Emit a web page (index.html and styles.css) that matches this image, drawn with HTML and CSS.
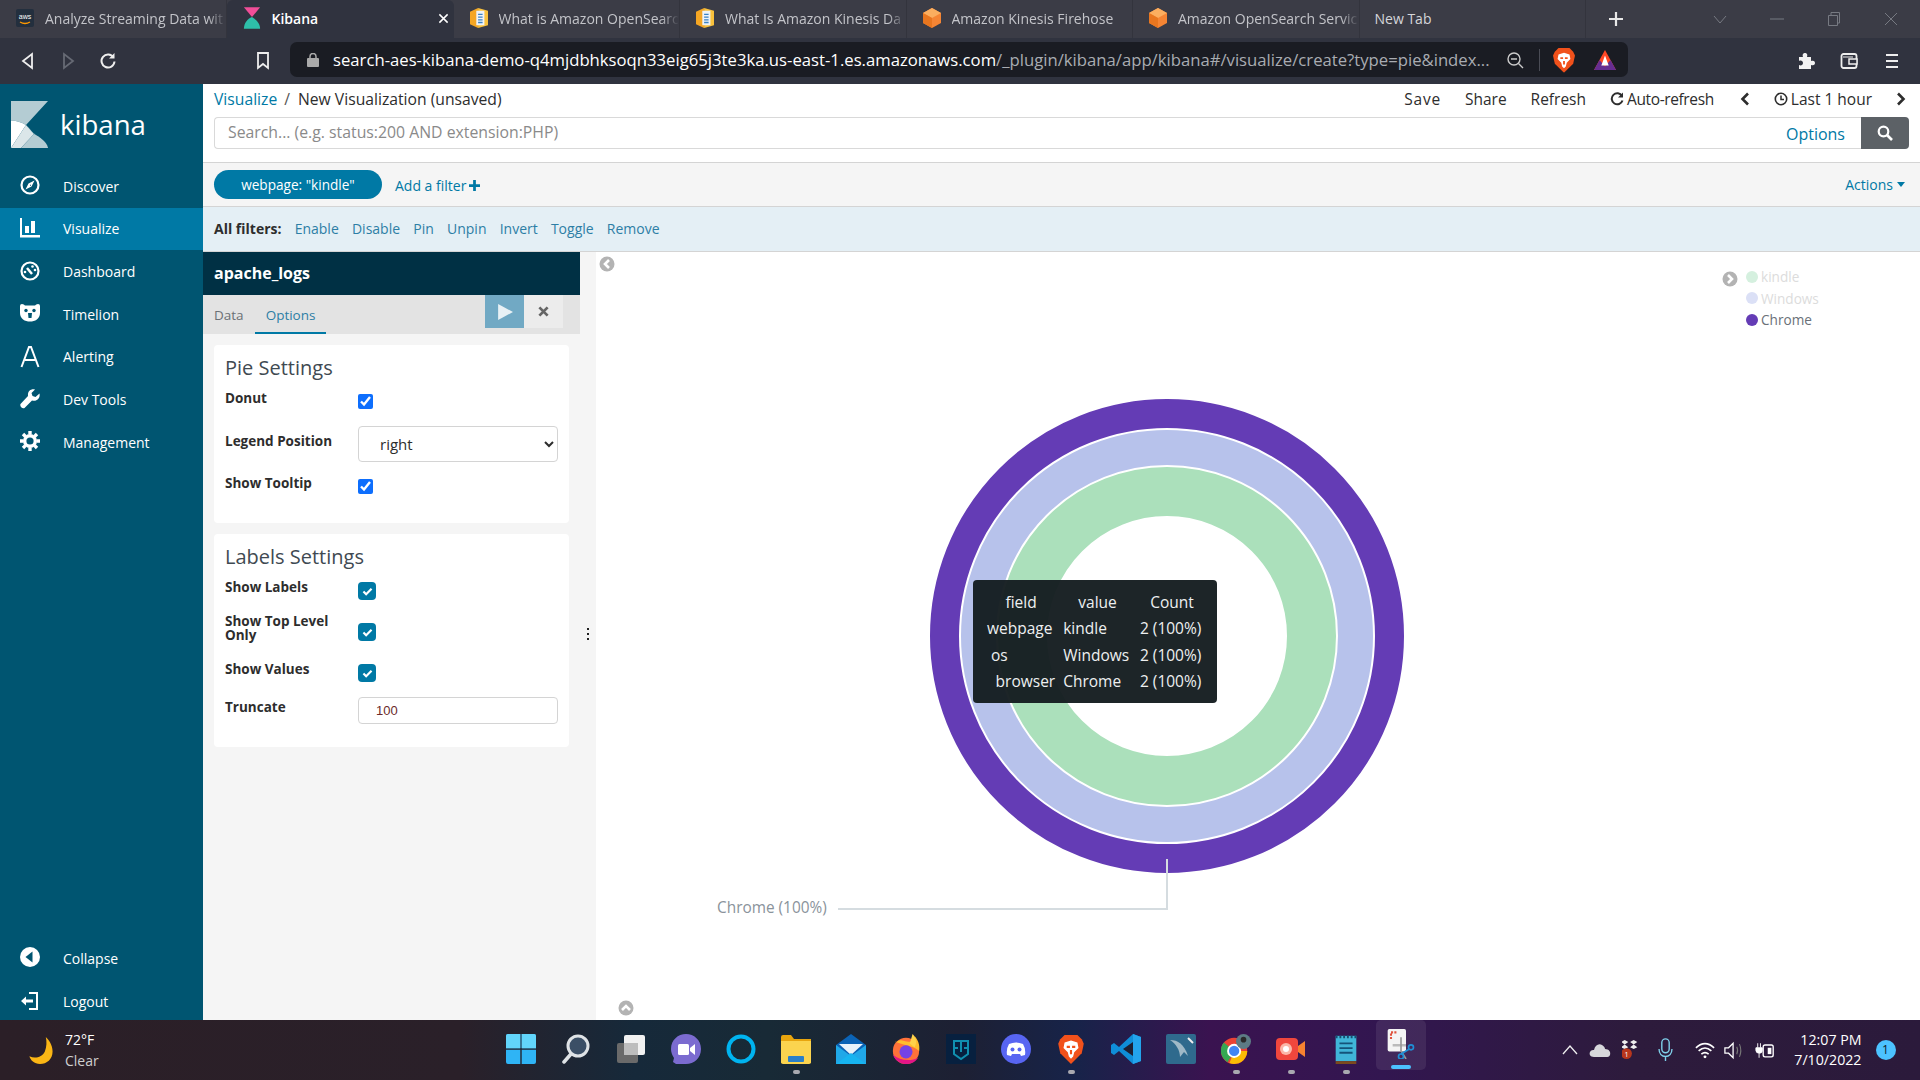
FILE: index.html
```html
<!DOCTYPE html>
<html lang="en">
<head>
<meta charset="utf-8">
<title>Kibana</title>
<link rel="stylesheet" href="styles.css">
</head>
<body>
<svg class="defs" width="0" height="0">
  <symbol id="cube" viewBox="0 0 20 22"><path d="M10 0 20 5.5V16.500L10 22 0 16.500V5.500Z" fill="#f58534"/><path d="M10 0 20 5.500 10 11 0 5.500Z" fill="#fbae5f"/><path d="M10 11V22L0 16.500V5.500Z" fill="#e8761f"/></symbol>
  <symbol id="doc" viewBox="0 0 20 24"><path d="M0 5 9 1V23L0 19Z" fill="#f5a623"/><path d="M9 1 20 4V20L9 23Z" fill="#f9c13c"/><path d="M7 4h9v16H7z" fill="#eef3f7"/><path d="M9 8h5M9 11h5M9 14h5M9 17h5" stroke="#3b82c4" stroke-width="1.500"/></symbol>
  <symbol id="brave" viewBox="0 0 24 28"><path d="M6 1H18L22 5 24 9 22 18 12 28 2 18 0 9 2 5Z" fill="#f1511b"/><path d="M6 8 12 6 18 8 19 13 15 17 14 21 12 23 10 21 9 17 5 13Z" fill="#fff"/><path d="M8 11h3v2H8zM13 11h3v2h-3zM11 15h2v4h-2z" fill="#f1511b"/></symbol>
</svg>
<div class="app">
  <div class="tabs">
    <div class="tab"><svg class="fav" viewBox="0 0 18 18"><rect width="18" height="18" rx="2" fill="#232f3e"/><text x="9" y="10" class="aws">aws</text><path d="M4 13q5 3 10 0" stroke="#f90" stroke-width="1.300" fill="none"/></svg><span class="tab-text">Analyze Streaming Data wit</span></div>
    <div class="tab tab-on"><svg class="fav" viewBox="0 0 20 24"><path d="M1 0H19L10 11Z" fill="#f04e98"/><path d="M1 24C1 18 5 13 10 11 15 14 19 18 19 24Z" fill="#2ebfa9"/></svg><span class="tab-text">Kibana</span><svg class="tab-x" viewBox="0 0 12 12"><path d="M1.500 1.500 10.500 10.500M10.500 1.500 1.500 10.500" stroke="#fff" stroke-width="1.600"/></svg></div>
    <div class="tab"><svg class="fav" viewBox="0 0 20 24"><use href="#doc"/></svg><span class="tab-text">What is Amazon OpenSearc</span></div>
    <div class="tab"><svg class="fav" viewBox="0 0 20 24"><use href="#doc"/></svg><span class="tab-text">What Is Amazon Kinesis Da</span></div>
    <div class="tab"><svg class="fav" viewBox="0 0 20 22"><use href="#cube"/></svg><span class="tab-text">Amazon Kinesis Firehose</span></div>
    <div class="tab"><svg class="fav" viewBox="0 0 20 22"><use href="#cube"/></svg><span class="tab-text">Amazon OpenSearch Servic</span></div>
    <div class="tab tab-new"><span class="tab-text">New Tab</span></div>
    <svg class="plus" viewBox="0 0 16 16"><path d="M8 1V15M1 8H15" stroke="#e8e8e8" stroke-width="2.200"/></svg>
    <div class="win">
      <svg class="win-ic" viewBox="0 0 14 14"><path d="M1 4 7 11 13 4" stroke="#777a82" fill="none"/></svg>
      <svg class="win-ic" viewBox="0 0 14 14"><path d="M0 7H14" stroke="#777a82"/></svg>
      <svg class="win-ic" viewBox="0 0 14 14"><path d="M1.500 3.500H10.500V13.500H1.500ZM4 3.500V.5H12.500V11H10.500" stroke="#777a82" fill="none"/></svg>
      <svg class="win-ic" viewBox="0 0 14 14"><path d="M1 1 13 13M13 1 1 13" stroke="#777a82"/></svg>
    </div>
  </div>

  <div class="toolbar">
    <div class="nav-btns">
      <svg class="tb-ic" viewBox="0 0 18 18"><path d="M13 2V16L4 9Z" fill="none" stroke="#eee" stroke-width="1.800"/></svg>
      <svg class="tb-ic" viewBox="0 0 18 18"><path d="M5 2V16L14 9Z" fill="none" stroke="#666a74" stroke-width="1.800"/></svg>
      <svg class="tb-ic" viewBox="0 0 18 18"><path d="M14.500 5.500A6.500 6.500 0 1 0 15.500 9.500" fill="none" stroke="#eee" stroke-width="2"/><path d="M15.500 1V6.500H10Z" fill="#eee"/></svg>
    </div>
    <svg class="bookmark" viewBox="0 0 14 18"><path d="M2 1H12V16L7 12 2 16Z" fill="none" stroke="#eee" stroke-width="1.800"/></svg>
    <div class="address">
      <svg class="lock" viewBox="0 0 12 14"><rect y="5" width="12" height="9" rx="1" fill="#aaa"/><path d="M3 6V3.500a3 3 0 0 1 6 0V6" fill="none" stroke="#aaa" stroke-width="1.500"/></svg>
      <div class="url"><span class="url-host">search-aes-kibana-demo-q4mjdbhksoqn33eig65j3te3ka.us-east-1.es.amazonaws.com</span>/_plugin/kibana/app/kibana#/visualize/create?type=pie&amp;index...</div>
      <svg class="zoomout" viewBox="0 0 18 18"><circle cx="8" cy="8" r="6" fill="none" stroke="#ccc" stroke-width="1.400"/><path d="M5 8H11M12.500 12.500 17 17" stroke="#ccc" stroke-width="1.400"/></svg>
      <span class="addr-sep"></span>
      <svg class="brave-ic" viewBox="0 0 24 28"><use href="#brave"/></svg>
      <svg class="bat" viewBox="0 0 24 24"><path d="M12 1 24 23H0Z" fill="#ff4724"/><path d="M0 23 6 12 12 19 18 12 24 23Z" fill="#662d91"/><path d="M12 7 16 18H8Z" fill="#fff"/></svg>
    </div>
    <svg class="ext ext-first" viewBox="0 0 18 18"><path d="M2 5H6C5 2 6.500 1 8 1S11 2 10 5H14V9C17 8 18 9.500 18 11S17 14 14 13V17H2V13C4 14 6 13 6 11S4 8 2 9Z" fill="#f2f2f2"/></svg>
    <svg class="ext" viewBox="0 0 18 18"><rect x="1.500" y="2" width="15" height="14" rx="2" fill="none" stroke="#eee" stroke-width="1.800"/><path d="M9 7H17V12H9Z" fill="#30333f" stroke="#eee" stroke-width="1.500"/><path d="M3 5H13" stroke="#eee"/></svg>
    <svg class="ext" viewBox="0 0 18 18"><path d="M3 3H15M3 9H15M3 15H15" stroke="#eee" stroke-width="2"/></svg>
  </div>

  <div class="main">
    <aside class="sidebar">
      <div class="logo">
        <svg class="logo-mark" viewBox="0 0 37 47"><path d="M0 0H37L15 24C10 21 5 19.500 0 19.500Z" fill="#b4ccd3"/><path d="M0 19.500C5 19.500 10 21 15 24L0 47Z" fill="#fff"/><path d="M15 24 0 47H10L23 33Z" fill="#dbe6e9"/><path d="M23 33 10 47H37C36 41 29 36 23 33Z" fill="#b4ccd3"/><path d="M15 24 37 47H30C29 40 22 30 15 24Z" fill="#b4ccd3"/></svg>
        <span class="logo-text">kibana</span>
      </div>
      <nav class="nav">
        <a class="nav-item"><svg class="nav-ic" viewBox="0 0 20 20"><circle cx="10" cy="10" r="8.500" fill="none" stroke="#fff" stroke-width="2.200"/><path d="M14.500 5.500 11.500 11.500 5.500 14.500 8.500 8.500ZM10 9V11H11" fill="#fff"/></svg>Discover</a>
        <a class="nav-item nav-on"><svg class="nav-ic" viewBox="0 0 20 20"><path d="M0 0H2V17H20V19.500H0Z" fill="#fff"/><path d="M5 8H9V15H5ZM11 3H15V15H11Z" fill="#fff"/></svg>Visualize</a>
        <a class="nav-item"><svg class="nav-ic" viewBox="0 0 20 20"><circle cx="10" cy="10" r="8.500" fill="none" stroke="#fff" stroke-width="2.200"/><path d="M7 7 12 13" stroke="#fff" stroke-width="2.500"/><circle cx="12.500" cy="5.500" r="1.300" fill="#fff"/><circle cx="15" cy="9" r="1.300" fill="#fff"/><circle cx="5" cy="11" r="1.300" fill="#fff"/></svg>Dashboard</a>
        <a class="nav-item"><svg class="nav-ic" viewBox="0 0 20 20"><path d="M0 3Q0 1 2 1 4 1 5 2.500H15Q16 1 18 1 20 1 20 3V10C20 16 15 18.500 10 18.500S0 16 0 10Z" fill="#fff"/><circle cx="6" cy="7.500" r="1.700" fill="#005571"/><circle cx="14" cy="7.500" r="1.700" fill="#005571"/><path d="M8 10H12L11.500 15H8.500Z" fill="#005571"/></svg>Timelion</a>
        <a class="nav-item"><svg class="nav-ic nav-ic-a" viewBox="0 0 20 20"><path d="M1.500 20 9 0H11L18.500 20M5 13H15" fill="none" stroke="#fff" stroke-width="2"/></svg>Alerting</a>
        <a class="nav-item"><svg class="nav-ic" viewBox="0 0 20 20"><path d="M19.500 4.500 15.500 8 12.500 7 11.500 4 15 .5C11 -.5 7.500 2 8 7L.5 15C-.5 17 2 20 4.500 19L12 11.500C17 13 20.500 9 19.500 4.500Z" fill="#fff"/></svg>Dev Tools</a>
        <a class="nav-item"><svg class="nav-ic" viewBox="0 0 20 20"><circle cx="10" cy="10" r="5.300" fill="none" stroke="#fff" stroke-width="3.400"/><path d="M10 0V20M0 10H20M3 3 17 17M17 3 3 17" stroke="#fff" stroke-width="3.400" stroke-dasharray="3.500 13"/></svg>Management</a>
      </nav>
      <div class="side-foot">
        <a class="nav-item nav-collapse"><svg class="nav-ic" viewBox="0 0 20 20"><circle cx="10" cy="10" r="10" fill="#fff"/><path d="M12.500 4.500V15.500L5.500 10Z" fill="#005571"/></svg>Collapse</a>
        <a class="nav-item"><svg class="nav-ic" viewBox="0 0 20 20"><path d="M9 1H18V19H9V17H16V3H9Z" fill="#fff"/><path d="M1 10 6 5.500V8.500H13V11.500H6V14.500Z" fill="#fff"/></svg>Logout</a>
      </div>
    </aside>

    <div class="content">
      <div class="topnav">
        <div class="crumbs"><a class="link">Visualize</a><span class="crumb-sep">/</span><span>New Visualization (unsaved)</span></div>
        <div class="top-actions">
          <span class="ta-save">Save</span><span>Share</span><span>Refresh</span>
          <span class="auto auto-r"><svg class="ic-13" viewBox="0 0 14 14"><path d="M12 4A5.500 5.500 0 1 0 12.500 8.500" fill="none" stroke="#2d2d2d" stroke-width="2"/><path d="M13 .5V5.500H8Z" fill="#2d2d2d"/></svg>Auto-refresh</span>
          <svg class="chev" viewBox="0 0 10 14"><path d="M8 1.500 2.500 7 8 12.500" fill="none" stroke="#2d2d2d" stroke-width="2.600"/></svg>
          <span class="auto"><svg class="ic-13" viewBox="0 0 14 14"><circle cx="7" cy="7" r="5.700" fill="none" stroke="#2d2d2d" stroke-width="1.600"/><path d="M7 3.500V7.500H10" fill="none" stroke="#2d2d2d" stroke-width="1.500"/></svg>Last 1 hour</span>
          <svg class="chev" viewBox="0 0 10 14"><path d="M2 1.500 7.500 7 2 12.500" fill="none" stroke="#2d2d2d" stroke-width="2.600"/></svg>
        </div>
      </div>
      <div class="searchrow">
        <div class="searchbox"><span class="placeholder">Search... (e.g. status:200 AND extension:PHP)</span><a class="link options">Options</a></div>
        <div class="searchbtn"><svg class="ic-16" viewBox="0 0 16 16"><circle cx="6.500" cy="6.500" r="4.800" fill="none" stroke="#fff" stroke-width="2.200"/><path d="M10 10 15 15" stroke="#fff" stroke-width="2.600"/></svg></div>
      </div>
      <div class="filterbar">
        <span class="pill">webpage: "kindle"</span>
        <a class="link addfilter">Add a filter<svg class="ic-11" viewBox="0 0 12 12"><path d="M6 0V12M0 6H12" stroke="#0079a5" stroke-width="3"/></svg></a>
        <a class="link actions">Actions<svg class="caret" viewBox="0 0 8 5"><path d="M0 0H8L4 5Z" fill="#0079a5"/></svg></a>
      </div>
      <div class="allfilters">
        <b class="af-title">All filters:</b><a>Enable</a><a>Disable</a><a>Pin</a><a>Unpin</a><a>Invert</a><a>Toggle</a><a>Remove</a>
      </div>

      <div class="work">
        <section class="panel">
          <div class="panel-inner">
            <h2 class="index-title">apache_logs</h2>
            <div class="panel-tabs">
              <span class="ptab">Data</span><span class="ptab ptab-on">Options</span>
              <span class="ptab-space"></span>
              <span class="play"><svg class="ic-16" viewBox="0 0 14 14"><path d="M1 0 14 7 1 14Z" fill="#e8f1f5"/></svg></span>
              <span class="discard"><svg class="ic-11" viewBox="0 0 12 12"><path d="M1.500 1.500 10.500 10.500M10.500 1.500 1.500 10.500" stroke="#666" stroke-width="3"/></svg></span>
            </div>
            <div class="card card-a">
              <h3 class="card-title">Pie Settings</h3>
              <div class="row row-donut"><label class="lab">Donut</label><input class="cb" type="checkbox" checked></div>
              <div class="row row-legend"><label class="lab lab-sel">Legend Position</label><select class="sel"><option>right</option></select></div>
              <div class="row"><label class="lab">Show Tooltip</label><input class="cb" type="checkbox" checked></div>
            </div>
            <div class="card card-b">
              <h3 class="card-title">Labels Settings</h3>
              <div class="row row-l1"><label class="lab">Show Labels</label><span class="tick"><svg viewBox="0 0 12 10"><path d="M1.500 5 4.500 8 10.500 2" fill="none" stroke="#fff" stroke-width="2.400"/></svg></span></div>
              <div class="row row-l2"><label class="lab lab-two">Show Top Level Only</label><span class="tick tick-two"><svg viewBox="0 0 12 10"><path d="M1.500 5 4.500 8 10.500 2" fill="none" stroke="#fff" stroke-width="2.400"/></svg></span></div>
              <div class="row row-l3"><label class="lab">Show Values</label><span class="tick"><svg viewBox="0 0 12 10"><path d="M1.500 5 4.500 8 10.500 2" fill="none" stroke="#fff" stroke-width="2.400"/></svg></span></div>
              <div class="row row-l4"><label class="lab">Truncate</label><input class="num" type="text" value="100"></div>
            </div>
          </div>
          <div class="gutter"><span class="dots"></span></div>
        </section>

        <section class="chart">
          <svg class="chart-svg" viewBox="0 0 1324 769">
            <circle cx="571" cy="385" r="222.500" fill="none" stroke="#643cb5" stroke-width="29"/>
            <circle cx="571" cy="385" r="188.500" fill="none" stroke="#b7c2eb" stroke-width="35"/>
            <circle cx="571" cy="385" r="144.500" fill="none" stroke="#abe0bb" stroke-width="49"/>
            <path d="M571 608V658H242" fill="none" stroke="#d5dce0" stroke-width="2"/>
            <text class="chart-label" x="121" y="662">Chrome (100%)</text>
            <g class="round-btn"><circle cx="11" cy="13" r="7.500"/><path d="M13 9 9 13 13 17" /></g>
            <g class="round-btn"><circle cx="30" cy="757" r="7.500"/><path d="M26 759 30 755 34 759" /></g>
            <g class="round-btn"><circle cx="1134" cy="28" r="7.500"/><path d="M1132 24 1136 28 1132 32" /></g>
          </svg>
          <ul class="legend">
            <li class="lg lg-dim"><i class="dot dot-g"></i>kindle</li>
            <li class="lg lg-dim"><i class="dot dot-b"></i>Windows</li>
            <li class="lg"><i class="dot dot-p"></i>Chrome</li>
          </ul>
          <table class="tip">
            <tr><th>field</th><th>value</th><th>Count</th></tr>
            <tr><td class="c-f">webpage</td><td>kindle</td><td>2 (100%)</td></tr>
            <tr><td class="c-f c-os">os</td><td>Windows</td><td>2 (100%)</td></tr>
            <tr><td class="c-f c-br">browser</td><td>Chrome</td><td>2 (100%)</td></tr>
          </table>
        </section>
      </div>
    </div>
  </div>

  <footer class="taskbar">
    <div class="weather">
      <svg class="moon" viewBox="0 0 24 28"><path d="M17 0C20 3 24 8 24 15 24 23 18 28 11 28 5 28 1 24 0 20 6 23 13 21 16 15 18 10 18 5 17 0Z" fill="#fbb615"/></svg>
      <div class="wtext"><div>72°F</div><div class="wsub">Clear</div></div>
    </div>
    <div class="apps">
      <span class="app-slot"><svg class="tk" viewBox="0 0 30 30"><path d="M0 2Q0 0 2 0H14.300V14.300H0ZM15.700 0H28Q30 0 30 2V14.300H15.700ZM0 15.700H14.300V30H2Q0 30 0 28ZM15.700 15.700H30V28Q30 30 28 30H15.700Z" fill="#2fb4f5"/><path d="M0 2Q0 0 2 0H14.300V14.300H0ZM15.700 0H28Q30 0 30 2V14.300H15.700Z" fill="#62d5fb"/></svg></span>
      <span class="app-slot"><svg class="tk" viewBox="0 0 30 30"><circle cx="17" cy="12" r="10" fill="#3b4f66" stroke="#dfe3e6" stroke-width="3"/><path d="M10 20 3 28" stroke="#dfe3e6" stroke-width="3.500" stroke-linecap="round"/></svg></span>
      <span class="app-slot"><svg class="tk" viewBox="0 0 30 30"><rect x="1" y="9" width="21" height="20" rx="2" fill="#6a6a6a"/><rect x="8" y="1" width="21" height="20" rx="2" fill="#f1f1f1"/><rect x="8" y="9" width="14" height="12" fill="#bdbdbd"/></svg></span>
      <span class="app-slot"><svg class="tk" viewBox="0 0 30 30"><path d="M15 0C23 0 30 6 30 15S23 30 15 30H5L2 28 3 24C1 21 0 18 0 15 0 6 7 0 15 0Z" fill="#7b6bd0"/><rect x="7" y="10" width="11" height="11" rx="1.500" fill="#fff"/><path d="M19 14 24 10V21L19 17Z" fill="#fff"/></svg></span>
      <span class="app-slot"><svg class="tk" viewBox="0 0 30 30"><circle cx="15" cy="15" r="12.500" fill="none" stroke="#00b4f0" stroke-width="4"/></svg></span>
      <span class="app-slot app-run"><svg class="tk" viewBox="0 0 30 30"><path d="M0 3Q0 1 2 1H10L13 5H30V29H0Z" fill="#e8a50e"/><path d="M0 7H30V28Q30 30 28 30H2Q0 30 0 28Z" fill="#fbd44f"/><rect x="7" y="22" width="16" height="6" rx="1" fill="#2a7fc8"/></svg></span>
      <span class="app-slot"><svg class="tk" viewBox="0 0 30 30"><path d="M15 0 30 11V30H0V11Z" fill="#0b63b5"/><path d="M3 10H27L15 21Z" fill="#e9f3fa"/><path d="M0 11 15 22 30 11V30H0Z" fill="#20a8e8"/><path d="M30 30H0L15 19Z" fill="#17b4f0"/></svg></span>
      <span class="app-slot"><svg class="tk" viewBox="0 0 30 32"><circle cx="15" cy="18" r="14" fill="#ff7139"/><path d="M3 8C5 11 6 5 11 7 17 9 25 9 24 2 28 6 30 12 29 18 22 12 12 12 3 8Z" fill="#ffbd2e"/><path d="M22 0C26 4 27 10 24 14L19 10Z" fill="#ffd24a"/><circle cx="15" cy="19" r="7" fill="#7542e5"/><path d="M1 22C4 30 12 32 15 32 21 32 26 29 28 25 20 30 8 28 1 22Z" fill="#e31587"/></svg></span>
      <span class="app-slot"><svg class="tk" viewBox="0 0 30 30"><rect width="30" height="30" fill="#07203f"/><path d="M8 7H22V20L15 25 8 20ZM15 7V18" fill="none" stroke="#1090b0" stroke-width="2"/><path d="M8 14H12M18 14H22" stroke="#1090b0" stroke-width="2"/></svg></span>
      <span class="app-slot"><svg class="tk" viewBox="0 0 30 30"><circle cx="15" cy="15" r="15" fill="#5865f2"/><path d="M8 10Q15 7 22 10 25 15 24 21L20 22 19 20H11L10 22 6 21Q5 15 8 10Z" fill="#fff"/><circle cx="11.500" cy="15.500" r="2" fill="#5865f2"/><circle cx="18.500" cy="15.500" r="2" fill="#5865f2"/></svg></span>
      <span class="app-slot app-run"><svg class="tk" viewBox="0 0 24 28"><use href="#brave"/></svg></span>
      <span class="app-slot"><svg class="tk" viewBox="0 0 30 30"><path d="M22 0 30 3V27L22 30 8 17 3 21 0 19V11L3 9 8 13Z" fill="#0f8ed8"/><path d="M22 8 12 15 22 22Z" fill="#1d2033"/><path d="M22 0 30 3V27L22 30Z" fill="#23a4ec"/></svg></span>
      <span class="app-slot"><svg class="tk" viewBox="0 0 30 30"><rect width="30" height="30" rx="2" fill="#2f6a8d"/><path d="M4 6C12 6 18 10 22 22L18 18 14 23C14 16 10 10 4 6Z" fill="#9fb9c7"/><path d="M22 4 27 9" stroke="#eee" stroke-width="2"/></svg></span>
      <span class="app-slot app-run"><svg class="tk" viewBox="0 0 30 32"><circle cx="13" cy="18" r="14" fill="#ea4335"/><path d="M13 18H27A14 14 0 0 1 8 31Z" fill="#fbbc04"/><path d="M13 18 6 30A14 14 0 0 1 2 9Z" fill="#34a853"/><circle cx="13" cy="18" r="6.500" fill="#4285f4" stroke="#fff" stroke-width="2"/><circle cx="23" cy="8" r="8" fill="#5d7b85"/><circle cx="23" cy="6" r="3" fill="#2a2a2a"/></svg></span>
      <span class="app-slot app-run"><svg class="tk" viewBox="0 0 30 30"><rect y="4" width="22" height="22" rx="4" fill="#f0473d"/><circle cx="10" cy="15" r="6" fill="#fbb7a8"/><circle cx="10" cy="15" r="3" fill="#fff"/><path d="M22 12 29 7V23L22 18Z" fill="#f78230"/></svg></span>
      <span class="app-slot app-run"><svg class="tk" viewBox="0 0 30 32"><rect x="4" y="2" width="22" height="27" fill="#40b5d8"/><path d="M4 29H26V32H4Z" fill="#7b4a1e"/><path d="M8 10H22M8 15H22M8 20H22" stroke="#14547a" stroke-width="2"/><path d="M4 3H26" stroke="#144f70" stroke-width="3" stroke-dasharray="2 2"/></svg></span>
      <span class="app-slot app-active"><svg class="tk" viewBox="0 0 32 36"><rect width="22" height="27" rx="2" fill="#f4f4f4"/><path d="M4 12V4H11" fill="none" stroke="#e0533d" stroke-width="2.500" stroke-dasharray="2.500 1.500"/><path d="M6 18H22V21H6Z" fill="#bbb"/><path d="M16 10V26L22 36" fill="none" stroke="#999" stroke-width="2"/><circle cx="28" cy="22" r="3" fill="none" stroke="#1f8fd6" stroke-width="2"/><circle cx="16" cy="33" r="3" fill="none" stroke="#1f8fd6" stroke-width="2"/><path d="M26 24 16 30" stroke="#1f8fd6" stroke-width="2"/></svg></span>
    </div>
    <div class="tray">
      <svg class="tr-chev" viewBox="0 0 16 10"><path d="M1 9 8 1 15 9" fill="none" stroke="#eee" stroke-width="1.300"/></svg>
      <svg class="tr-cloud" viewBox="0 0 22 16"><path d="M5 15C1 15 0 12 1 10 2 8 4 8 5 8 6 3 10 1 13 3 15 4 16 6 16 7 20 7 22 10 21 13 20 15 19 15 17 15Z" fill="#d7d7db"/></svg>
      <svg class="tr-drop" viewBox="0 0 20 24"><path d="M3 1 7 3 3 6-1 3ZM13 1 17 3 13 6 9 3ZM3 6 7 9 3 11-1 9ZM13 6 17 9 13 11 9 9Z" fill="#eee"/><circle cx="5" cy="16" r="6" fill="#b8361c"/><text x="5" y="19.500" class="badge-t">1</text></svg>
      <svg class="tr-mic" viewBox="0 0 16 26"><rect x="4" y="1" width="8" height="15" rx="4" fill="none" stroke="#7fd0ea" stroke-width="1.500"/><path d="M1 12C1 17 4 20 8 20S15 17 15 12M8 20V25" fill="none" stroke="#7fd0ea" stroke-width="1.500"/></svg>
      <svg class="tr-wifi" viewBox="0 0 22 18"><path d="M1 6Q11 -3 21 6M4 9.500Q11 3 18 9.500M7 13Q11 9.500 15 13" fill="none" stroke="#fff" stroke-width="1.800"/><circle cx="11" cy="16" r="1.600" fill="#fff"/></svg>
      <svg class="tr-vol" viewBox="0 0 22 20"><path d="M1 7H5L10 2V18L5 13H1Z" fill="none" stroke="#fff" stroke-width="1.400"/><path d="M14 6Q16 10 14 14M17 3Q20 10 17 17" fill="none" stroke="#777" stroke-width="1.200"/></svg>
      <svg class="tr-bat" viewBox="0 0 22 18"><path d="M1 6H8V9Q8 12 5 12 1 12 1 9ZM3 1V6M6 1V6M4.500 12V17" stroke="#fff" fill="#fff"/><rect x="9" y="3" width="11" height="13" rx="2" fill="none" stroke="#fff" stroke-width="1.500"/><rect x="14" y="6" width="4" height="7" fill="#fff"/></svg>
      <div class="clock"><div>12:07 PM</div><div>7/10/2022</div></div>
      <span class="notif">1</span>
    </div>
  </footer>
</div>
</body>
</html>
```

FILE: styles.css
```css
* { box-sizing: border-box; }
html, body { margin: 0; height: 100%; overflow: hidden; }
body { font-family: "Open Sans", "Noto Sans", sans-serif; color: #2d2d2d; background: #fff; }
.defs { position: absolute; }
.app { display: flex; flex-direction: column; width: 1920px; height: 1080px; }
a { text-decoration: none; }
.link { color: #0079a5; }

/* tabs */
.tabs { display: flex; align-items: stretch; height: 38px; background: #3b3c46; flex: none; }
.tab { width: 226.500px; display: flex; align-items: center; padding: 0 0 2px 16px; border-right: 1px solid #33343d; color: #c3c4c9; font-size: 14px; }
.tab-on { background: #30333f; color: #fff; font-weight: 600; border-radius: 6px 6px 0 0; border-right: 0; width: 227px; padding-left: 16px; }
.tab-new { padding-left: 15px; color: #d5d6da; }
.fav { width: 18px; height: 24px; flex: none; margin-right: 11px; }
.tab-text { white-space: nowrap; flex: 1; -webkit-mask-image: linear-gradient(90deg, #000 90%, transparent 100%); mask-image: linear-gradient(90deg, #000 90%, transparent 100%); }
.tab-on .tab-text, .tab-new .tab-text { -webkit-mask-image: none; mask-image: none; }
.aws { font-size: 7px; fill: #fff; text-anchor: middle; font-family: "Liberation Sans", sans-serif; }
.tab-x { width: 11px; height: 11px; flex: none; margin-right: 5px; }
.plus { width: 16px; height: 16px; align-self: center; margin-left: 22px; flex: none; }
.win { margin-left: auto; display: flex; align-items: center; gap: 43px; padding-right: 22px; }
.win-ic { width: 14px; height: 14px; display: block; }

/* toolbar */
.toolbar { display: flex; align-items: center; height: 46px; background: #30333f; flex: none; }
.nav-btns { display: flex; gap: 22px; margin-left: 19px; }
.tb-ic { width: 18px; height: 18px; display: block; }
.bookmark { width: 14px; height: 18px; margin-left: 139px; flex: none; margin-right: 20px; }
.address { width: 1338px; height: 35px; background: #1a1c23; border-radius: 7px; display: flex; align-items: center; padding-left: 17px; flex: none; margin-top: -3px; }
.lock { width: 12px; height: 14px; flex: none; margin-right: 14px; }
.url { width: 1158px; flex: none; white-space: nowrap; overflow: hidden; font-size: 16.700px; color: #a9acb2; }
.url-host { color: #fff; }
.zoomout { width: 18px; height: 18px; margin-left: 15px; flex: none; }
.addr-sep { width: 1px; height: 22px; background: #4a4c55; margin: 0 13px 0 15px; }
.brave-ic { width: 22px; height: 26px; flex: none; }
.bat { width: 22px; height: 22px; margin-left: 19px; flex: none; }
.ext { width: 18px; height: 18px; flex: none; margin-left: 25px; }
.ext-first { margin-left: 169px; }

/* main */
.main { flex: 1; display: flex; min-height: 0; }
.sidebar { width: 203px; flex: none; background: #005571; color: #fff; display: flex; flex-direction: column; overflow: hidden; }
.logo { display: flex; align-items: center; height: 81px; padding: 0 0 1px 11px; flex: none; }
.logo-mark { width: 37px; height: 47px; flex: none; margin-right: 12px; }
.logo-text { font-size: 27.600px; line-height: 47px; font-weight: 400; }
.nav { display: flex; flex-direction: column; }
.nav-item { display: flex; align-items: center; height: 42.650px; padding-left: 20px; color: #fff; font-size: 14px; flex: none; }
.nav-on { background: #0079a5; }
.nav-ic { width: 20px; height: 20px; margin-right: 23px; flex: none; position: relative; top: -1px; }
.nav-ic-a { width: 20px; height: 22px; top: 0; }
.nav-collapse { margin-bottom: 1px; }
.side-foot { margin-top: auto; margin-bottom: -3px; }

.content { flex: 1; display: flex; flex-direction: column; min-width: 0; }
.topnav { display: flex; align-items: center; justify-content: space-between; height: 33px; padding: 0 0 3px 11px; flex: none; font-size: 15.700px; }
.crumbs { display: flex; font-size: 15.700px; }
.crumb-sep { margin: 0 8px 0 7px; color: #555; }
.top-actions { display: flex; align-items: center; color: #2d2d2d; font-size: 15.500px; gap: 24px; padding-right: 14px; }
.ta-save { letter-spacing: .8px; }
.auto { display: inline-flex; align-items: center; gap: 3px; }
.auto-r { letter-spacing: -.38px; margin-right: 2px; }
.ic-13 { width: 14px; height: 14px; flex: none; }
.ic-16 { width: 16px; height: 16px; display: block; }
.ic-11 { width: 11px; height: 11px; flex: none; }
.chev { width: 10px; height: 14px; flex: none; }
.searchrow { display: flex; height: 46px; padding: 0 11px 13px; flex: none; border-bottom: 1px solid #d4d4d4; }
.searchbox { flex: 1; display: flex; align-items: center; justify-content: space-between; border: 1px solid #d9d9d9; border-right: 0; border-radius: 4px 0 0 4px; padding: 0 16px 2px 13px; font-size: 15.800px; }
.placeholder { color: #8a8a8a; }
.options { position: relative; top: 2px; font-size: 16px; }
.searchbtn { width: 48px; background: #5c6166; display: flex; align-items: center; justify-content: center; border-radius: 0 4px 4px 0; }
.filterbar { display: flex; align-items: center; height: 44px; padding: 0 15px 0 11px; background: #f5f5f5; border-bottom: 1px solid #d4d4d4; flex: none; }
.pill { width: 168px; height: 29px; background: #0079a5; border-radius: 15px; color: #fff; font-size: 13.600px; display: flex; align-items: center; justify-content: center; margin-top: -1px; }
.addfilter { font-size: 14px; margin: 2px 0 0 13px; display: inline-flex; align-items: center; gap: 3px; }
.actions { margin-left: auto; font-size: 14px; display: inline-flex; align-items: center; gap: 4px; }
.caret { width: 8px; height: 5px; }
.allfilters { display: flex; align-items: center; gap: 13.200px; height: 45px; padding: 0 0 1px 11px; background: #e4eff5; border-bottom: 1px solid #d4d4d4; flex: none; font-size: 14px; }
.allfilters a { color: #2d7ea5; }
.af-title { font-weight: 700; color: #2d2d2d; }

/* work area */
.work { flex: 1; display: flex; min-height: 0; }
.panel { width: 393px; flex: none; display: flex; background: #f5f5f5; }
.panel-inner { width: 377px; flex: none; }
.gutter { flex: 1; display: flex; justify-content: center; padding-top: 376px; }
.dots { width: 2px; height: 13px; background: repeating-linear-gradient(180deg, #222 0 2px, transparent 2px 5px); }
.index-title { margin: 0; height: 43px; background: #003044; color: #fff; font-size: 16px; font-weight: 700; line-height: 43px; padding-left: 11px; }
.panel-tabs { display: flex; height: 39px; background: #e3e3e3; font-size: 13.500px; }
.ptab { line-height: 40px; padding: 0 11px; color: #6b7176; }
.ptab-on { color: #2d7ea5; border-bottom: 2px solid #0079a5; }
.ptab-space { flex: 1; }
.play { width: 39px; height: 33px; background: #71a9c4; display: flex; align-items: center; justify-content: center; }
.discard { width: 39px; height: 33px; background: #ececec; display: flex; align-items: center; justify-content: center; margin-right: 17px; }
.card { width: 355px; margin-left: 11px; background: #fff; border-radius: 4px; padding: 11px 11px 0; }
.card-a { margin-top: 11px; height: 178px; }
.card-b { margin-top: 11px; height: 213px; }
.card-title { margin: 0 0 8px; font-size: 20px; font-weight: 400; line-height: 24px; color: #3f4a52; }
.row { display: grid; grid-template-columns: 133px 1fr; align-items: start; }
.lab { font-size: 13.500px; font-weight: 700; line-height: 20px; color: #2d2d2d; }
.cb { margin: 6px 0 0; width: 15px; height: 15px; accent-color: #0d6efd; }
.row-donut { height: 38px; }
.row-legend { height: 47px; }
.lab-sel { margin-top: 5px; }
.sel { width: 200px; height: 36px; border: 1px solid #d4d4d4; border-radius: 4px; background: #fff; padding-left: 17px; font-family: inherit; font-size: 15px; color: #2d2d2d; }
.tick { width: 18px; height: 18px; background: #0079a5; border-radius: 4px; display: flex; align-items: center; justify-content: center; margin-top: 5px; }
.tick svg { width: 11px; height: 9px; }
.tick-two { margin-top: 9px; }
.row-l1 { height: 37px; }
.row-l2 { height: 45px; }
.row-l3 { height: 38px; }
.lab-two { line-height: 14px; width: 115px; }
.num { width: 200px; height: 27px; border: 1px solid #d4d4d4; border-radius: 4px; padding: 0 0 0 17px; font-family: "Liberation Sans", sans-serif; font-size: 13px; color: #6b2a2a; background: #fff; }

/* chart */
.chart { flex: 1; position: relative; background: #fff; overflow: hidden; }
.chart-svg { position: absolute; left: 0; top: -1px; width: 1324px; height: 769px; }
.chart-label { font-family: "Open Sans", sans-serif; font-size: 15.400px; fill: #8a939b; }
.round-btn circle { fill: #b3b3b3; }
.round-btn path { fill: none; stroke: #fff; stroke-width: 2.600; }
.legend { position: absolute; left: 1150px; top: 14px; margin: 0; padding: 0; list-style: none; font-size: 13.600px; }
.lg { display: flex; align-items: center; height: 21.500px; color: #6a7078; }
.lg-dim { color: #dcdcdc; }
.dot { width: 12px; height: 12px; border-radius: 50%; margin-right: 3px; }
.dot-g { background: #d5f0df; }
.dot-b { background: #dbe0f6; }
.dot-p { background: #643cb5; }
.tip { position: absolute; left: 377px; top: 328px; width: 244px; height: 123px; background: rgba(20, 28, 31, .96); color: #eef0f1; border-radius: 4px; border-collapse: separate; border-spacing: 0; font-size: 15.500px; padding: 9px 9px 9px 10px; }
.tip th { font-weight: 400; text-align: center; padding: 0 4px; line-height: 26px; }
.tip td { padding: 0 4px; line-height: 26px; white-space: nowrap; }
.c-f { text-align: left; }
.c-os { padding-left: 8px !important; }
.c-br { text-align: right; }

/* taskbar */
.taskbar { height: 60px; flex: none; display: flex; align-items: center; color: #fff; background: linear-gradient(90deg, #2b1f27 0, #2a2029 24%, #16293a 33%, #182a36 40%, #1d2033 50%, #172349 56%, #3a1350 63%, #321650 72%, #2d1b3c 85%, #2b1a3b 100%); }
.weather { width: 493.500px; flex: none; display: flex; align-items: center; padding-left: 29px; }
.moon { width: 24px; height: 27px; flex: none; margin-right: 12px; }
.wtext { font-size: 14px; line-height: 21px; }
.wsub { color: #cfcfcf; }
.apps { display: flex; flex: none; }
.app-slot { width: 55px; height: 60px; display: flex; align-items: center; justify-content: center; position: relative; }
.tk { width: 30px; height: 30px; display: block; margin-top: -3px; }
.app-run::after { content: ""; position: absolute; bottom: 6px; left: 24px; width: 7px; height: 4px; border-radius: 2px; background: #a9a9b0; }
.app-active { background: rgba(255, 255, 255, .08); border-radius: 5px; width: 50px; height: 50px; margin-left: 2px; }
.app-active::after { content: ""; position: absolute; bottom: 1px; left: 15px; width: 20px; height: 4px; border-radius: 2px; background: #4cc2ff; }
.tray { display: flex; align-items: center; flex: 1; padding-left: 136px; }
.tray svg { display: block; flex: none; }
.tr-chev { width: 16px; height: 10px; margin-right: 11px; }
.tr-cloud { width: 22px; height: 16px; margin-right: 11px; }
.tr-drop { width: 18px; height: 22px; margin-right: 18px; }
.badge-t { font-size: 8px; fill: #fff; text-anchor: middle; font-family: "Open Sans", sans-serif; }
.tr-mic { width: 15px; height: 24px; margin-right: 22px; }
.tr-wifi { width: 20px; height: 17px; margin-right: 9px; }
.tr-vol { width: 20px; height: 19px; margin-right: 11px; }
.tr-bat { width: 20px; height: 17px; }
.clock { width: 84px; margin-left: 3px; text-align: right; font-size: 14.200px; line-height: 20px; }
.notif { width: 20px; height: 20px; border-radius: 50%; background: #4cc2ff; color: #10202a; font-size: 12px; text-align: center; line-height: 20px; margin-left: 14px; }
```
